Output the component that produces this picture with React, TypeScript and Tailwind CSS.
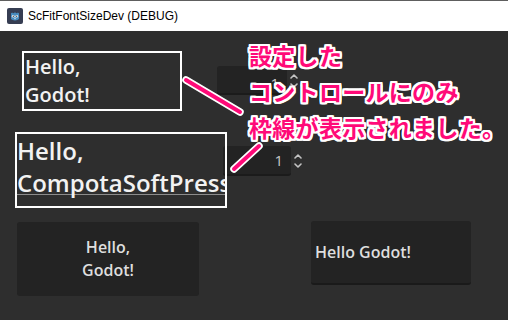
import React from "react"

const ui = "font-['Open_Sans','Noto_Sans',sans-serif] font-semibold"

function GodotIcon() {
  return (
    <svg width="16" height="16" viewBox="0 0 16 16">
      <rect x="0" y="0" width="16" height="16" rx="2" fill="#363d52" />
      <path
        d="M4 5.2 L5.2 4.4 L6 5.3 L7.3 4.9 L8 3.9 L8.7 4.9 L10 5.3 L10.8 4.4 L12 5.2 L12 11 Q10.8 12.4 8 12.4 Q5.2 12.4 4 11 Z"
        fill="#478cbf"
      />
      <circle cx="6.2" cy="8.2" r="1.3" fill="#fff" />
      <circle cx="9.8" cy="8.2" r="1.3" fill="#fff" />
      <circle cx="6.3" cy="8.3" r="0.7" fill="#414042" />
      <circle cx="9.7" cy="8.3" r="0.7" fill="#414042" />
      <rect x="7.5" y="9.6" width="1" height="1.6" fill="#fff" />
    </svg>
  )
}

function UpDown() {
  return (
    <svg width="8" height="16" viewBox="0 0 8 16" fill="none" stroke="#c4c4c4" strokeWidth="1.6" strokeLinecap="round" strokeLinejoin="round">
      <path d="M1 5 L4 2 L7 5" />
      <path d="M1 11 L4 14 L7 11" />
    </svg>
  )
}

function SpinBox({ w, h, pt }: { w: string; h: string; pt: string }) {
  return (
    <div className="flex items-center gap-[3px]">
      <div className={`${w} ${h} ${pt} rounded-[3px] bg-[#232323] border-b-2 border-[#1b1b1b] flex items-center justify-end pr-[8px]`}>
        <span className="font-['Open_Sans','Noto_Sans',sans-serif] text-[15px] text-[#c8c8c8]">1</span>
      </div>
      <UpDown />
    </div>
  )
}

const outline =
  "[text-shadow:2px_0_#fff,-2px_0_#fff,0_2px_#fff,0_-2px_#fff,2px_2px_#fff,-2px_-2px_#fff,2px_-2px_#fff,-2px_2px_#fff,1px_2px_#fff,2px_1px_#fff,-1px_2px_#fff,-2px_1px_#fff,1px_-2px_#fff,2px_-1px_#fff,-1px_-2px_#fff,-2px_-1px_#fff]"

export default function App() {
  return (
    <div className="w-[508px] h-[320px] overflow-hidden bg-[#2e2e2e] flex flex-col">
      {/* title bar */}
      <div className="h-[31px] shrink-0 bg-white border-t border-[#5e5e5e] flex items-center pl-[7px] gap-[5px]">
        <GodotIcon />
        <span className="font-['Segoe_UI','Liberation_Sans',sans-serif] text-[12px] text-black">
          ScFitFontSizeDev (DEBUG)
        </span>
      </div>

      <div className="relative flex-1">
        {/* row 1 */}
        <div className="flex items-start mt-[20px]">
          <div className="ml-[22px] w-[160px] h-[60px] border-2 border-white pl-[1px]">
            <p className={`${ui} text-[20px] leading-[28px] text-[#f2f2f2]`}>
              Hello,
              <br />
              Godot!
            </p>
          </div>
          <div className="ml-[35px] mt-[15px]">
            <SpinBox w="w-[70px]" h="h-[29px]" pt="pt-[8px]" />
          </div>
        </div>

        {/* row 2 */}
        <div className="flex items-start mt-[21px]">
          <div className="relative z-10 ml-[15px] w-[212px] h-[76px] border-2 border-white pt-[1px] overflow-hidden">
            <p className={`${ui} text-[24px] leading-[32px] text-[#f2f2f2] h-[60px] border-b border-[#8c8c8c] whitespace-nowrap`}>
              Hello,
              <br />
              CompotaSoftPress
            </p>
          </div>
          <div className="-ml-[4px] mt-[14px]">
            <SpinBox w="w-[68px]" h="h-[30px]" pt="pt-0" />
          </div>
        </div>

        {/* row 3 */}
        <div className="flex items-start mt-[13px]">
          <button className="ml-[17px] mt-[1px] w-[182px] h-[74px] rounded-[3px] bg-[#232323] flex items-center justify-center">
            <span className={`${ui} text-[16px] leading-[23px] text-[#dedede] text-center`}>
              Hello,
              <br />
              Godot!
            </span>
          </button>
          <button className="ml-[112px] w-[160px] h-[64px] rounded-[3px] bg-[#232323] border-b-2 border-[#1a1a1a] flex items-center pl-[4px]">
            <span className={`${ui} text-[16px] text-[#dedede]`}>Hello Godot!</span>
          </button>
        </div>

        {/* annotation */}
        <svg className="absolute left-0 top-0 z-20" width="508" height="289" viewBox="0 31 508 289">
          <g strokeLinecap="round">
            <line x1="186" y1="80" x2="240" y2="112" stroke="#fff" strokeWidth="7.5" />
            <line x1="234" y1="169" x2="259" y2="146" stroke="#fff" strokeWidth="7.5" />
            <line x1="186" y1="80" x2="240" y2="112" stroke="#ff0a78" strokeWidth="4" />
            <line x1="234" y1="169" x2="259" y2="146" stroke="#ff0a78" strokeWidth="4" />
          </g>
        </svg>
        <div
          className={`absolute z-20 left-[249px] top-[6px] font-['Noto_Sans_CJK_JP',sans-serif] font-bold text-[23px] leading-[36px] tracking-[0.3px] text-[#ff0a78] ${outline}`}
        >
          <p>設定した</p>
          <p>コントロールにのみ</p>
          <p>枠線が表示されました。</p>
        </div>
      </div>
    </div>
  )
}
